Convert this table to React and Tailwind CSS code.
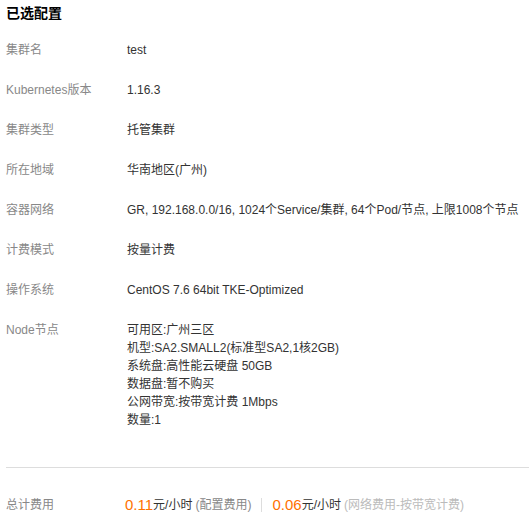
import React from 'react'

const rows = [
  { label: '集群名', value: 'test' },
  { label: 'Kubernetes版本', value: '1.16.3' },
  { label: '集群类型', value: '托管集群' },
  { label: '所在地域', value: '华南地区(广州)' },
  { label: '容器网络', value: 'GR, 192.168.0.0/16, 1024个Service/集群, 64个Pod/节点, 上限1008个节点' },
  { label: '计费模式', value: '按量计费' },
  { label: '操作系统', value: 'CentOS 7.6 64bit TKE-Optimized' },
]

const nodeLines = [
  '可用区:广州三区',
  '机型:SA2.SMALL2(标准型SA2,1核2GB)',
  '系统盘:高性能云硬盘 50GB',
  '数据盘:暂不购买',
  '公网带宽:按带宽计费 1Mbps',
  '数量:1',
]

export default function App() {
  return (
    <div
      className="w-[529px] h-[520px] bg-white pl-[6px] overflow-hidden"
      style={{ fontFamily: '"Liberation Sans", "Noto Sans CJK SC", sans-serif' }}
    >
      <h2 className="text-[14px] font-bold text-black leading-[26px]">已选配置</h2>

      <div className="mt-[15px] flex flex-col gap-[22px] text-[12px] leading-[18px]">
        {rows.map((r) => (
          <div key={r.label} className="flex">
            <div className="w-[121px] shrink-0 text-[#888]">{r.label}</div>
            <div className="text-[#333] whitespace-nowrap">{r.value}</div>
          </div>
        ))}
        <div className="flex">
          <div className="w-[121px] shrink-0 text-[#888]">Node节点</div>
          <div className="text-[#333] flex flex-col">
            {nodeLines.map((l) => (
              <div key={l}>{l}</div>
            ))}
          </div>
        </div>
      </div>

      <div className="mt-[38px] border-t border-[#ddd]" />

      <div className="mt-[28px] flex items-center text-[12px] leading-[18px]">
        <div className="w-[121px] shrink-0 text-[#888]">总计费用</div>
        <div className="flex items-center">
          <span className="text-[15px] text-[#ff7200] ml-[-2px]">0.11</span>
          <span className="text-[#333]">元/小时</span>
          <span className="text-[#888] ml-[3px]">(配置费用)</span>
          <span className="mx-[10px] h-[14px] border-l border-[#ddd]" />
          <span className="text-[15px] text-[#ff7200]">0.06</span>
          <span className="text-[#333]">元/小时</span>
          <span className="text-[#bbb] ml-[3px]">(网络费用-按带宽计费)</span>
        </div>
      </div>
    </div>
  )
}
